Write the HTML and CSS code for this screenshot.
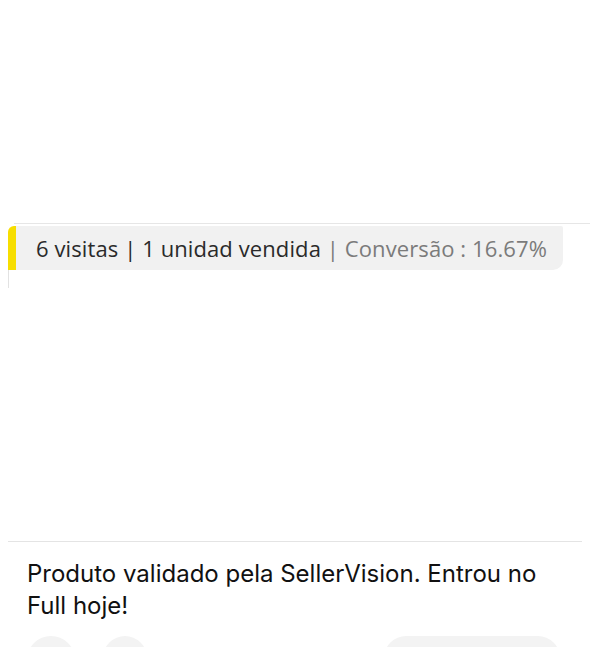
FILE: index.html
```html
<!DOCTYPE html>
<html lang="pt">
<head>
<meta charset="UTF-8">
<meta name="viewport" content="width=device-width, initial-scale=1.0">
<title>SellerVision</title>
<link rel="stylesheet" href="styles.css">
</head>
<body>

<!-- bloco de estatisticas -->
<div class="thread">
  <div class="top-rule"></div>
  <div class="stat">
    <span class="stat-text"><span class="strong">6 visitas | 1 unidad vendida</span><span class="muted"> | Conversão : 16.67%</span></span>
  </div>
  <div class="stat-tail"></div>
</div>

<!-- mensagem -->
<div class="message">
  <div class="rule"></div>
  <p class="message-text">Produto validado pela SellerVision. Entrou no Full hoje!</p>
  <div class="actions">
    <span class="chip-round"></span>
    <span class="chip-round small"></span>
    <span class="chip-wide"></span>
  </div>
</div>

</body>
</html>
```

FILE: styles.css
```css
/* pagina */
html, body {
  height: 647px;
  overflow: hidden;
}

body {
  margin: 0;
  background: #fff;
  width: 590px;
}

/* bloco de estatisticas */
.thread {
  padding-top: 223px;
}

.top-rule {
  margin-left: 14px;
  height: 1px;
  background: #e6e6e6;
}

.stat {
  margin-left: 8px;
  margin-top: 2px;
  width: 555px;
  height: 44px;
  box-sizing: border-box;
  display: flex;
  align-items: center;
  background: #f1f1f1;
  border-left: 8px solid #f7de00;
  border-radius: 6px 2px 10px 0;
  padding-left: 20px;
}

.stat-text {
  font-family: "Open Sans", "Noto Sans", sans-serif;
  font-size: 22px;
  letter-spacing: 0.1px;
  white-space: nowrap;
}

.strong {
  color: #2a2a2a;
}

.muted {
  color: #7b7b7b;
}

.stat-tail {
  margin-left: 8px;
  width: 1px;
  height: 18px;
  background: #e2e2e2;
}

/* mensagem */
.message {
  margin-top: 253px;
}

.rule {
  margin: 0 8px;
  height: 1px;
  background: #e4e4e4;
}

.message-text {
  margin: 16px 0 0;
  padding: 0 40px 0 27px;
  font-family: Inter, Roboto, sans-serif;
  font-size: 24px;
  line-height: 32px;
  color: #111;
}

/* botoes cortados pela borda da tela */
.actions {
  display: flex;
  align-items: flex-start;
  padding: 0 30px 0 27px;
  margin-top: 14px;
  gap: 28px;
  height: 11px;
  overflow: hidden;
}

.chip-round {
  flex: none;
  width: 48px;
  height: 48px;
  border-radius: 50%;
  background: #f3f3f3;
}

.chip-round.small {
  width: 44px;
  height: 44px;
}

.chip-wide {
  flex: none;
  margin-left: auto;
  width: 176px;
  height: 44px;
  border-radius: 22px;
  background: #f3f3f3;
}
```
